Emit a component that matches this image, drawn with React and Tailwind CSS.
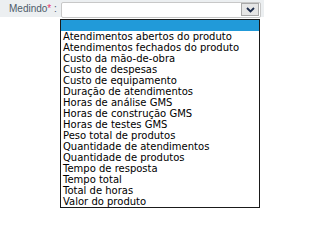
const options = [
  'Atendimentos abertos do produto',
  'Atendimentos fechados do produto',
  'Custo da mão-de-obra',
  'Custo de despesas',
  'Custo de equipamento',
  'Duração de atendimentos',
  'Horas de análise GMS',
  'Horas de construção GMS',
  'Horas de testes GMS',
  'Peso total de produtos',
  'Quantidade de atendimentos',
  'Quantidade de produtos',
  'Tempo de resposta',
  'Tempo total',
  'Total de horas',
  'Valor do produto',
];

export default function App() {
  return (
    <div className="relative h-[209px] w-[264px] overflow-hidden bg-white font-['DejaVu_Sans',Verdana,sans-serif] text-[10px]">
      {/* field row */}
      <div className="flex h-[17px] items-center bg-[#eceff1]">
        <label className="w-[61px] shrink-0 whitespace-nowrap pl-[9px] font-['Liberation_Sans',Arial,sans-serif] text-[10px] leading-none text-[#4d5b69]">
          Medindo<span className="text-[#e8336a]">*</span> :
        </label>
        <div className="mt-[2px] flex h-[16px] w-[200px] items-center justify-end rounded-[2px] border border-[#c8c8c8] bg-white pr-px">
          <div className="flex h-[13px] w-[18px] items-center justify-center border border-[#a8a8a8] bg-[#e6e6e6]">
            <svg width="9" height="6" viewBox="0 0 9 6">
              <path d="M1 1l3.5 3.5L8 1" fill="none" stroke="#1c2b4a" strokeWidth="1.8" />
            </svg>
          </div>
        </div>
      </div>

      {/* open list */}
      <ul className="absolute left-[60px] top-[19px] w-[200px] border border-[#1a1a1a] bg-white leading-[11px] text-black">
        <li className="h-[11px] bg-[#219ad9]" />
        {options.map(o => (
          <li key={o} className="h-[11px] whitespace-nowrap pl-[2px]">{o}</li>
        ))}
      </ul>
    </div>
  );
}
